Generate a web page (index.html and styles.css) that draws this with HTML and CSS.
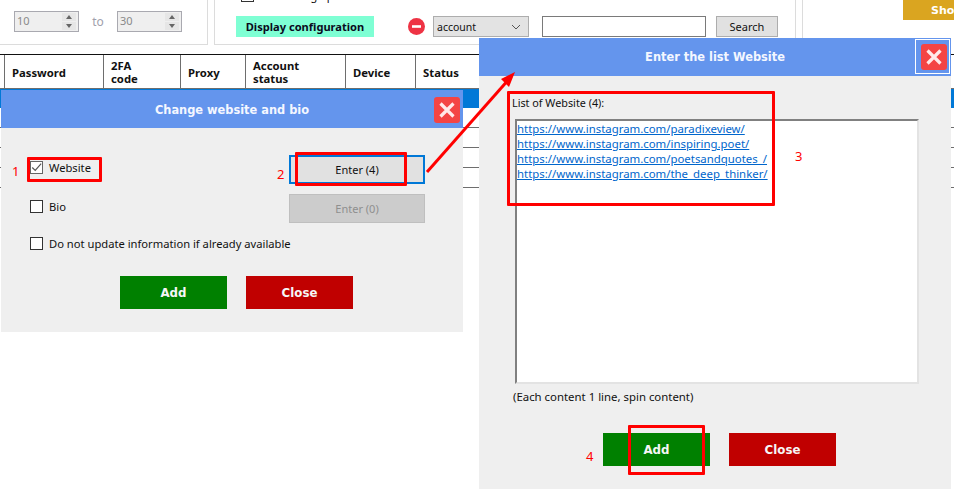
FILE: index.html
```html
<!DOCTYPE html>
<html lang="en">
<head>
<meta charset="utf-8">
<title>Change website and bio</title>
<link rel="stylesheet" href="styles.css">
</head>
<body>
<div class="page">
  <div class="top">
    <section class="group group-spin">
      <div class="spin"><span class="spin-val">10</span><span class="spin-btns"><i class="up"></i><i class="down"></i></span></div>
      <span class="to">to</span>
      <div class="spin"><span class="spin-val">30</span><span class="spin-btns"><i class="up"></i><i class="down"></i></span></div>
    </section>
    <section class="group group-filter">
      <div class="clipped"><span class="box"></span><span>Use setting up</span></div>
      <div class="filter-row">
        <button class="display">Display configuration</button>
        <svg class="minus" viewBox="0 0 17 17" width="17" height="17"><circle cx="8.5" cy="8.5" r="8.5" fill="#ee3344"/><rect x="4" y="7.2" width="9" height="2.6" fill="#fff"/></svg>
        <div class="select"><span>account</span><svg viewBox="0 0 10 6" width="10" height="6"><path d="M1 1l4 4 4-4" fill="none" stroke="#555" stroke-width="1"/></svg></div>
        <div class="textbox"></div>
        <button class="search">Search</button>
      </div>
    </section>
    <section class="group-show"><button class="show">Show</button></section>
  </div>
  <div class="thead">
    <div class="th"></div>
    <div class="th">Password</div>
    <div class="th">2FA<br>code</div>
    <div class="th">Proxy</div>
    <div class="th">Account<br>status</div>
    <div class="th">Device</div>
    <div class="th">Status</div>
    <div class="th"></div>
  </div>
  <div class="row-selected"></div>
  <div class="row"></div>
  <div class="row"></div>
  <div class="row"></div>
  <div class="row"></div>
</div>

<div class="win win-bio">
  <header class="win-title">
    <span class="title-text">Change website and bio</span>
    <button class="x"><svg viewBox="0 0 26 26" width="26" height="26"><path d="M6.5 6.5l13 13M19.5 6.5l-13 13" stroke="#ffe9e9" stroke-width="3.2" fill="none"/></svg></button>
  </header>
  <div class="bio-body">
    <div class="bio-checks">
      <label class="check"><span class="box box-on"><svg viewBox="0 0 13 13" width="11" height="11"><path d="M1.5 6.5l3.5 3.5 7-8" fill="none" stroke="#555" stroke-width="1.4"/></svg></span>Website</label>
      <label class="check">
        <span class="box"></span>Bio</label>
      <label class="check"><span class="box"></span>Do not update information if already available</label>
    </div>
    <div class="bio-enter">
      <button class="enter focus">Enter (4)</button>
      <button class="enter off">Enter (0)</button>
    </div>
  </div>
  <div class="actions actions-bio">
    <button class="act add">Add</button>
    <button class="act close">Close</button>
  </div>
</div>

<div class="win win-list">
  <header class="win-title">
    <span>Enter the list Website</span>
    <span class="x-focus"><button class="x"><svg viewBox="0 0 26 26" width="26" height="26"><path d="M6.5 6.5l13 13M19.5 6.5l-13 13" stroke="#ffe9e9" stroke-width="3.2" fill="none"/></svg></button></span>
  </header>
  <div class="list-body">
    <div class="list-label">List of Website (4):</div>
    <div class="list-area">
      <div class="link">https://www.instagram.com/paradixeview/</div>
      <div class="link">https://www.instagram.com/inspiring.poet/</div>
      <div class="link">https://www.instagram.com/poetsandquotes_/</div>
      <div class="link">https://www.instagram.com/the_deep_thinker/</div>
    </div>
    <div class="list-note">(Each content 1 line, spin content)</div>
  </div>
  <div class="actions actions-list">
    <button class="act add">Add</button>
    <button class="act close">Close</button>
  </div>
</div>

<div class="mark m-website"></div>
<div class="mark m-enter"></div>
<div class="mark m-list"></div>
<div class="mark m-add"></div>
<span class="num n1">1</span>
<span class="num n2">2</span>
<span class="num n3">3</span>
<span class="num n4">4</span>
<svg class="arrow" viewBox="0 0 954 495" width="954" height="495"><path d="M427 172L510 78" stroke="#f00" stroke-width="3" fill="none"/><path d="M515 72L501 79L509 87Z" fill="#f00"/></svg>
</body>
</html>
```
FILE: styles.css
```css
* { box-sizing: border-box; }
html, body { margin: 0; padding: 0; }
body {
  width: 954px; height: 495px; overflow: hidden; position: relative; background: #fff;
  font-family: "Noto Sans", sans-serif; font-size: 11px; color: #111;
}
button { font-family: inherit; font-size: inherit; padding: 0; margin: 0; border: 0; }

.top { display: flex; height: 54px; }
.group { height: 45px; border-bottom: 1px solid #dcdcdc; }
.group-spin {
  width: 208px; border-right: 1px solid #dcdcdc; display: flex; align-items: flex-start;
  padding: 11px 0 0 14px;
}
.spin {
  width: 65px; height: 21px; background: #efefef; border: 1px solid #a9a9b0; display: flex;
  justify-content: space-between; padding: 1px;
}
.spin-val { color: #8a8a8a; padding-left: 1px; line-height: 16px; }
.spin-btns { width: 14px; display: flex; flex-direction: column; gap: 1px; margin-right: 1px; }
.spin-btns i { flex: 1; background: #e6e6e6; position: relative; display: flex; align-items: center; justify-content: center; }
.up::after { content: ""; border: 3px solid transparent; border-top: 0; border-bottom: 4px solid #666; }
.down::after { content: ""; border: 3px solid transparent; border-bottom: 0; border-top: 4px solid #666; }
.to { width: 38px; text-align: center; color: #a0a0ac; font-size: 12px; line-height: 20px; padding-top: 1px; }

.group-filter {
  width: 582px; margin-left: 6px; border-left: 1px solid #dcdcdc; border-right: 1px solid #dcdcdc;
  overflow: hidden; padding-left: 21px;
}
.clipped { display: flex; align-items: center; gap: 5px; height: 14px; margin-top: -12px; padding-left: 5px; white-space: nowrap; }
.clipped .box { flex: none; }
.filter-row { display: flex; align-items: center; margin-top: 14px; height: 21px; }
.display {
  width: 138px; height: 21px; background: #7fffd4; color: #0a0a20;
  font-weight: 700; font-size: 11.1px;
}
.minus { margin-left: 34px; }
.select {
  width: 96px; height: 21px; margin-left: 8px; background: #e3e3e3; border: 1px solid #adadad;
  display: flex; align-items: center; justify-content: space-between; padding: 0 7px 0 3px; font-size: 10.5px;
}
.textbox { width: 164px; height: 21px; margin-left: 13px; border: 1px solid #7a7a7a; background: #fff; }
.search { width: 62px; height: 21px; margin-left: 10px; background: #e1e1e1; border: 1px solid #adadad; color: #111; }
.group-show { margin-left: 6px; flex: 1; border-left: 1px solid #dcdcdc; display: flex; justify-content: flex-end; align-items: flex-start; overflow: hidden; }
.show {
  width: 51px; height: 20px; background: #daa520; color: #fff; text-align: left; padding-left: 28px;
  font-family: "DejaVu Sans", sans-serif; font-weight: 700; font-size: 11px; white-space: nowrap; overflow: hidden;
}

.thead {
  display: grid; grid-template-columns: 5px 99px 77px 65px 100px 70px 65px 1fr; height: 35px;
  border-top: 1px solid #111; border-bottom: 1px solid #6e6e6e;
}
.th {
  border-right: 1px solid #6e6e6e; padding: 1px 0 0 7px; display: flex; align-items: center;
  font-weight: 700; font-size: 11.3px; line-height: 13px; color: #111;
}
.th:first-child { padding: 0; }
.th:last-child { border-right: 0; }
.row-selected { height: 19px; background: #0078d7; border-top: 1px solid #0078d7; }
.row { height: 20px; border-bottom: 1px solid #6e6e6e; }

.win { position: absolute; background: #efefef; }
.win-bio { left: 1px; top: 90px; width: 462px; height: 242px; }
.win-list { left: 479px; top: 38px; width: 472px; height: 451px; }
.win-title {
  height: 38px; background: #6495ed; color: #f4f7ff; display: flex; align-items: center; justify-content: center;
  position: relative; font-family: "DejaVu Sans", sans-serif; font-weight: 700; font-size: 11.4px;
}
.title-text { padding-top: 2px; }
.x { width: 26px; height: 26px; background: #f44444; border-radius: 3px; display: block; position: absolute; right: 3px; top: 7px; }
.x svg { display: block; }
.x-focus { position: absolute; right: 1px; top: 1px; width: 35px; height: 35px; border: 1px solid #fff; }
.x-focus .x { right: 2px; top: 4px; }

.bio-body { display: flex; justify-content: space-between; padding: 27px 38px 0 29px; height: 148px; }
.bio-checks { display: flex; flex-direction: column; padding-top: 5px; width: 250px; flex: none; }
.check { display: flex; align-items: center; gap: 6px; height: 14px; margin-bottom: 25px; white-space: nowrap; font-size: 11.2px; }
.check:nth-child(2) { margin-bottom: 23px; }
.box { width: 13px; height: 13px; border: 1px solid #333; background: #fff; display: flex; align-items: center; justify-content: center; flex: none; }
.box-on { border-color: #666; }
.bio-enter { display: flex; flex-direction: column; gap: 10px; flex: none; }
.enter { width: 136px; height: 29px; font-size: 11px; }
.enter.focus { background: #e1e1e1; border: 2px solid #0078d7; color: #111; }
.enter.off { background: #cccccc; border: 1px solid #bfbfbf; color: #8f8f8f; }

.actions { display: flex; gap: 19px; }
.actions-bio { padding-left: 119px; }
.actions-list { padding-left: 124px; margin-top: 29px; }
.act { width: 107px; height: 33px; color: #f6f6f6; font-family: "DejaVu Sans", sans-serif; font-weight: 700; font-size: 11.8px; }
.add { background: #008000; }
.close { background: #c00000; }

.list-body { padding: 20px 33px 0 33px; display: flex; flex-direction: column; }
.list-label { height: 14px; line-height: 14px; font-size: 10.8px; }
.list-area {
  width: 404px; height: 265px; margin: 9px 0 0 3px; background: #fff; padding: 0;
  border-top: 2px solid #808080; border-left: 2px solid #808080; border-right: 2px solid #e3e3e3; border-bottom: 2px solid #e3e3e3;
}
.link { color: #0066cc; text-decoration: underline; font-size: 11.4px; line-height: 15px; white-space: nowrap; }
.list-note { margin-top: 6px; margin-left: 1px; line-height: 14px; font-size: 11.4px; }

.mark { position: absolute; border: 3px solid #f00; border-radius: 1px; }
.m-website { left: 27px; top: 157px; width: 75px; height: 25px; }
.m-enter { left: 295px; top: 152px; width: 112px; height: 34px; }
.m-list { left: 507px; top: 91px; width: 268px; height: 115px; }
.m-add { left: 628px; top: 425px; width: 77px; height: 50px; }
.num { position: absolute; color: #f00; font-size: 13px; line-height: 16px; }
.n1 { left: 12px; top: 163px; }
.n2 { left: 277px; top: 166px; }
.n3 { left: 795px; top: 148px; }
.n4 { left: 586px; top: 448px; }
.arrow { position: absolute; left: 0; top: 0; pointer-events: none; }
```
